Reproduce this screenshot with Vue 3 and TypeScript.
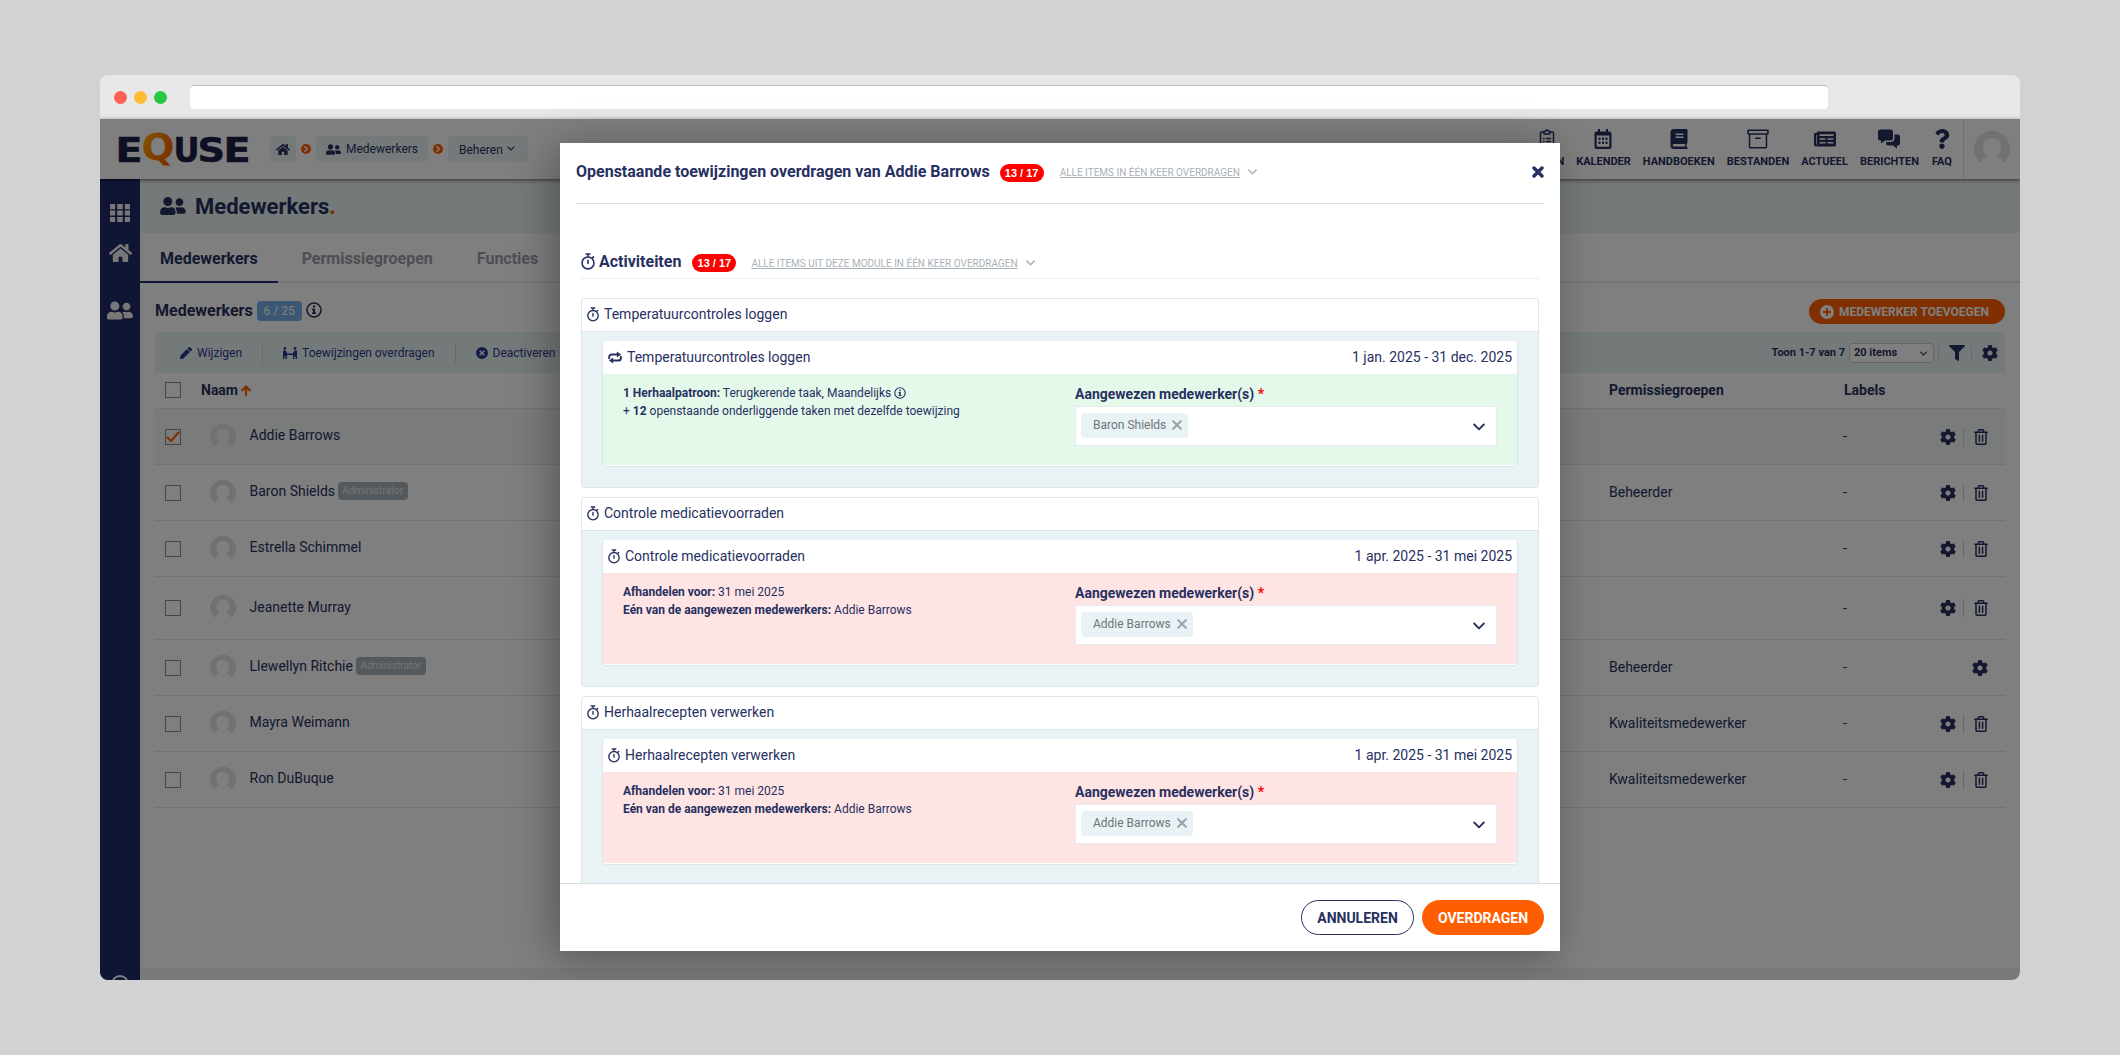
<template>
  <div class="stage">
    <div class="browser">
      <div class="browser-bar">
        <div class="dots">
          <span class="dot red"></span>
          <span class="dot yellow"></span>
          <span class="dot green"></span>
        </div>
        <div class="address"></div>
      </div>

      <div class="app">
        <header class="topbar">
          <svg class="logo" viewBox="-6 0 144 42">
            <defs>
              <linearGradient id="logo-q" x1="0" y1="0" x2="1" y2="0.6">
                <stop offset="0" stop-color="#ffb400" />
                <stop offset="1" stop-color="#ff5e00" />
              </linearGradient>
            </defs>
            <text
              v-for="letter in logo"
              :key="letter.x"
              :class="letter.char === 'Q' ? 'logo-q' : 'logo-text'"
              :x="letter.x"
              :y="letter.y"
              :textLength="letter.width"
              lengthAdjust="spacingAndGlyphs"
            >{{ letter.char }}</text>
          </svg>
          <nav class="crumbs">
            <span class="crumb home"><Icon name="home" /></span>
            <span class="crumb-sep"><Icon name="angle" /></span>
            <span class="crumb people"><Icon name="users" />Medewerkers</span>
            <span class="crumb-sep"><Icon name="angle" /></span>
            <span class="crumb manage">Beheren<Icon name="chevron" /></span>
          </nav>
          <nav class="modules">
            <div v-for="item in modules" :key="item.label" class="module">
              <Icon :name="item.icon" />
              <span>{{ item.label }}</span>
            </div>
          </nav>
          <div class="profile"><Icon name="avatar" /></div>
        </header>

        <div class="below">
          <aside class="sidebar">
            <Icon name="grid" class="side-grid" />
            <Icon name="home" class="side-home" />
            <span class="side-line"></span>
            <Icon name="users" class="side-users" />
            <span class="side-help"></span>
          </aside>

          <main class="main">
            <div class="page-title">
              <Icon name="users" />
              <h1>Medewerkers<b>.</b></h1>
            </div>

            <div class="tabs">
              <span v-for="(tab, i) in tabs" :key="tab" class="tab" :class="{ active: i === 0 }">{{ tab }}</span>
            </div>

            <div class="content">
              <div class="section-head">
                <h2>Medewerkers</h2>
                <span class="count">6 / 25</span>
                <Icon name="info" />
                <button class="add"><Icon name="plus" />MEDEWERKER TOEVOEGEN</button>
              </div>

              <div class="toolbar">
                <span class="tool"><Icon name="pencil" />Wijzigen</span>
                <span class="tool transfer"><Icon name="transfer" />Toewijzingen overdragen</span>
                <span class="tool"><Icon name="cancel" />Deactiveren</span>
                <span class="showing">Toon 1-7 van 7</span>
                <span class="page-size">20 items<Icon name="chevron" /></span>
                <span class="tool-icon"><Icon name="filter" /></span>
                <span class="tool-icon last"><Icon name="cog" /></span>
              </div>

              <div class="row head">
                <span class="check"></span>
                <span class="sort">Naam<Icon name="arrow" /></span>
                <span class="groups">Permissiegroepen</span>
                <span class="labels">Labels</span>
              </div>
              <div
                v-for="user in users"
                :key="user.name"
                class="row"
                :class="{ selected: user.selected, tall: user.tall }"
              >
                <span class="check"><Icon v-if="user.selected" name="tick" /></span>
                <Icon name="avatar" class="avatar" />
                <span class="name">{{ user.name }}<em v-if="user.admin">Administrator</em></span>
                <span class="groups">{{ user.group }}</span>
                <span class="labels">-</span>
                <span class="actions">
                  <Icon name="cog" />
                  <template v-if="!user.locked">
                    <i></i>
                    <Icon name="trash" class="trash" />
                  </template>
                </span>
              </div>
              <div class="page-foot"></div>
            </div>
          </main>
        </div>

        <div class="overlay">
          <section class="modal">
            <header class="modal-head">
              <h2>Openstaande toewijzingen overdragen van Addie Barrows</h2>
              <span class="pill">13 / 17</span>
              <a class="all">ALLE ITEMS IN ÉÉN KEER OVERDRAGEN</a>
              <Icon name="chevron" class="all-icon" />
              <Icon name="close" class="close" />
            </header>

            <div class="modal-body">
              <div class="module-head">
                <Icon name="timer" />
                <h2>Activiteiten</h2>
                <span class="pill">13 / 17</span>
                <a class="all">ALLE ITEMS UIT DEZE MODULE IN ÉÉN KEER OVERDRAGEN</a>
                <Icon name="chevron" class="all-icon" />
              </div>

              <article v-for="task in tasks" :key="task.title" class="card">
                <div class="card-head"><Icon name="timer" />{{ task.title }}</div>
                <div class="task">
                  <div class="card-head">
                    <Icon :name="task.recurring ? 'repeat' : 'timer'" :class="{ repeat: task.recurring }" />
                    {{ task.title }}
                    <span class="period">{{ task.period }}</span>
                  </div>
                  <div class="task-body" :class="task.recurring ? 'done' : 'open'">
                    <div v-if="task.recurring" class="details">
                      <p><b>1 Herhaalpatroon:</b> Terugkerende taak, Maandelijks <Icon name="info" /></p>
                      <p>+ <b>12</b> openstaande onderliggende taken met dezelfde toewijzing</p>
                    </div>
                    <div v-else class="details">
                      <p><b>Afhandelen voor:</b> 31 mei 2025</p>
                      <p><b>Eén van de aangewezen medewerkers:</b> Addie Barrows</p>
                    </div>
                    <div class="field">
                      <label>Aangewezen medewerker(s) <span>*</span></label>
                      <div class="select">
                        <span class="tag">{{ task.assignee }}<Icon name="cross" /></span>
                        <Icon name="chevron" class="open-icon" />
                      </div>
                    </div>
                  </div>
                </div>
              </article>
            </div>

            <footer class="modal-foot">
              <button class="btn">ANNULEREN</button>
              <button class="btn primary">OVERDRAGEN</button>
            </footer>
          </section>
        </div>
      </div>
    </div>
  </div>
</template>

<script setup lang="ts">
import { h } from 'vue'

interface Glyph {
  box: string
  body: string
}

interface User {
  name: string
  group?: string
  admin?: boolean
  selected?: boolean
  tall?: boolean
  locked?: boolean
}

interface Task {
  title: string
  period: string
  assignee: string
  recurring?: boolean
}

const line = (d: string, width: number) =>
  `<path d="${d}" fill="none" stroke="currentColor" stroke-width="${width}" stroke-linecap="round" stroke-linejoin="round"/>`
const solid = (d: string) => `<path d="${d}" fill="currentColor" fill-rule="evenodd"/>`

const glyphs: Record<string, Glyph> = {
  home: {
    box: '0 0 576 512',
    body: solid('M280.37 148.26L96 300.11V464a16 16 0 0 0 16 16l112.06-.29a16 16 0 0 0 15.92-16V368a16 16 0 0 1 16-16h64a16 16 0 0 1 16 16v95.64a16 16 0 0 0 16 16.05L464 480a16 16 0 0 0 16-16V300L295.67 148.26a12.19 12.19 0 0 0-15.3 0zM571.6 251.47L488 182.56V44.05a12 12 0 0 0-12-12h-56a12 12 0 0 0-12 12v72.61L318.47 43a48 48 0 0 0-61 0L4.34 251.47a12 12 0 0 0-1.6 16.9l25.5 31A12 12 0 0 0 45.15 301l235.22-193.74a12.19 12.19 0 0 1 15.3 0L530.9 301a12 12 0 0 0 16.9-1.6l25.5-31a12 12 0 0 0-1.7-16.93z'),
  },
  users: {
    box: '0 32 640 448',
    body: solid('M192 256c61.9 0 112-50.1 112-112S253.9 32 192 32 80 82.1 80 144s50.1 112 112 112zm76.8 32h-8.3c-20.8 10-43.9 16-68.5 16s-47.6-6-68.5-16h-8.3C51.6 288 0 339.6 0 403.2V432c0 26.5 21.5 48 48 48h288c26.5 0 48-21.5 48-48v-28.8c0-63.6-51.6-115.2-115.2-115.2zM480 256c53 0 96-43 96-96s-43-96-96-96-96 43-96 96 43 96 96 96zm48 32h-3.8c-13.9 4.8-28.6 8-44.2 8s-30.3-3.2-44.2-8H432c-20.4 0-39.2 5.9-55.7 15.4 24.4 26.3 39.7 61.2 39.7 99.8v38.4c0 2.2-.5 4.3-.6 6.4H592c26.5 0 48-21.5 48-48 0-61.9-50.1-112-112-112z'),
  },
  cog: {
    box: '8 8 496 496',
    body: solid('M487.4 315.7l-42.6-24.6c4.3-23.2 4.3-47 0-70.2l42.6-24.6c4.9-2.8 7.1-8.6 5.5-14-11.1-35.6-30-67.8-54.7-94.6-3.8-4.1-10-5.1-14.8-2.3L380.8 110c-17.9-15.4-38.5-27.3-60.8-35.1V25.8c0-5.6-3.9-10.5-9.4-11.7-36.7-8.2-74.3-7.8-109.2 0-5.5 1.2-9.4 6.1-9.4 11.7V75c-22.2 7.9-42.8 19.8-60.8 35.1L88.7 85.5c-4.9-2.8-11-1.9-14.8 2.3-24.7 26.7-43.6 58.9-54.7 94.6-1.7 5.4.6 11.2 5.5 14L67.3 221c-4.3 23.2-4.3 47 0 70.2l-42.6 24.6c-4.9 2.8-7.1 8.6-5.5 14 11.1 35.6 30 67.8 54.7 94.6 3.8 4.1 10 5.1 14.8 2.3l42.6-24.6c17.9 15.4 38.5 27.3 60.8 35.1v49.2c0 5.6 3.9 10.5 9.4 11.7 36.7 8.2 74.3 7.8 109.2 0 5.5-1.2 9.4-6.1 9.4-11.7v-49.2c22.2-7.9 42.8-19.8 60.8-35.1l42.6 24.6c4.9 2.8 11 1.9 14.8-2.3 24.7-26.7 43.6-58.9 54.7-94.6 1.5-5.5-.7-11.3-5.6-14.1zM256 336c-44.1 0-80-35.9-80-80s35.9-80 80-80 80 35.9 80 80-35.9 80-80 80z'),
  },
  filter: {
    box: '0 0 512 512',
    body: solid('M487.976 0H24.028C2.71 0-8.047 25.866 7.058 40.971L192 225.941V432c0 7.831 3.821 15.17 10.237 19.662l80 55.98C298.02 518.69 320 507.493 320 487.98V225.941l184.947-184.97C520.021 25.896 509.338 0 487.976 0z'),
  },
  pencil: {
    box: '0 0 512 512',
    body: solid('M497.9 142.1l-46.1 46.1c-4.7 4.7-12.3 4.7-17 0l-111-111c-4.7-4.7-4.7-12.3 0-17l46.1-46.1c18.7-18.7 49.1-18.7 67.9 0l60.1 60.1c18.8 18.7 18.8 49.1 0 67.9zM284.2 99.8L21.6 362.4.4 483.9c-2.9 16.4 11.4 30.6 27.8 27.8l121.5-21.3 262.6-262.6c4.7-4.7 4.7-12.3 0-17l-111-111c-4.8-4.7-12.4-4.7-17.1 0z'),
  },
  question: {
    box: '0 0 384 512',
    body: solid('M202.021 0C122.202 0 70.503 32.703 29.914 91.026c-7.363 10.58-5.093 25.086 5.178 32.874l43.138 32.709c10.373 7.865 25.132 6.026 33.253-4.148 25.049-31.381 43.63-49.449 82.757-49.449 30.764 0 68.816 19.799 68.816 49.631 0 22.552-18.617 34.134-48.993 51.164-35.423 19.86-82.299 44.576-82.299 106.405V320c0 13.255 10.745 24 24 24h72.471c13.255 0 24-10.745 24-24v-5.773c0-42.86 125.268-44.645 125.268-160.627C377.504 66.256 286.902 0 202.021 0zM192 373.459c-38.196 0-69.271 31.075-69.271 69.271 0 38.195 31.075 69.27 69.271 69.27s69.271-31.075 69.271-69.271-31.075-69.27-69.271-69.27z'),
  },
  angle: { box: '0 0 10 10', body: line('M4 2.700L6.300 5L4 7.300', 1.6) },
  chevron: { box: '0 0 12 8', body: line('M1.200 1.500L6 6.300L10.800 1.500', 1.9) },
  close: { box: '0 0 12 12', body: line('M2 2L10 10M10 2L2 10', 3.4) },
  cross: { box: '0 0 10 10', body: line('M1.200 1.200L8.800 8.800M8.800 1.200L1.200 8.800', 2.1) },
  tick: { box: '0 0 14 12', body: line('M1.500 6.500L5 10L12.500 1.500', 2.2) },
  arrow: { box: '0 0 10 11', body: line('M5 10V1.800M1.300 5.300L5 1.500L8.700 5.300', 2.3) },
  info: {
    box: '0 0 16 16',
    body: line('M8 1A7 7 0 1 1 8 15A7 7 0 1 1 8 1', 1.5) + solid('M7 3.600h2v2H7zM6 6.800h3v3.700h1V12H6v-1.500h1V8.200H6z'),
  },
  plus: {
    box: '0 0 14 14',
    body: solid('M7 0a7 7 0 1 1 0 14A7 7 0 1 1 7 0zM6 3v3H3v2h3v3h2V8h3V6H8V3z'),
  },
  cancel: {
    box: '0 0 12 12',
    body: solid('M6 0a6 6 0 1 1 0 12A6 6 0 1 1 6 0zM4.300 3.200L3.200 4.300 4.900 6 3.200 7.700l1.100 1.100L6 7.100l1.700 1.700 1.100-1.100L7.100 6l1.700-1.700-1.100-1.100L6 4.900z'),
  },
  transfer: {
    box: '0 0 14 12',
    body:
      solid('M2 0a1.400 1.400 0 1 1 0 2.800A1.400 1.400 0 1 1 2 0zM12 0a1.400 1.400 0 1 1 0 2.800A1.400 1.400 0 1 1 12 0zM0 3.500h2.800l1.500 2.900h5.400l1.500-2.900H14V12h-1.400V9.500h-1.200V12h-1.400V8H4v4H2.600V9.500H1.400V12H0z'),
  },
  grid: {
    box: '0 0 20 18',
    body: solid('M1 0h4.200v5.200H0V1a1 1 0 0 1 1-1zM7.200 0h5.600v5.200H7.200zM14.800 0H19a1 1 0 0 1 1 1v4.200h-5.200zM0 6.600h5.200v4.900H0zM7.200 6.600h5.600v4.900H7.200zM14.800 6.600H20v4.900h-5.200zM0 12.900h5.200V18H1a1 1 0 0 1-1-1zM7.200 12.900h5.600V18H7.200zM14.800 12.900H20V17a1 1 0 0 1-1 1h-4.200z'),
  },
  clipboard: {
    box: '0 0 16 20',
    body:
      line('M5 3H2.500A1 1 0 0 0 1.500 4V18A1 1 0 0 0 2.500 19H13.500A1 1 0 0 0 14.500 18V4A1 1 0 0 0 13.500 3H11M5 2.500H6.500A1.500 1.500 0 0 1 9.500 2.500H11V5H5Z', 1.5) +
      line('M4.500 9.500H5M7.500 9.500H11.500M4.500 12.500H5M7.500 12.500H11.500M4.500 15.500H5M7.500 15.500H11.500', 1.5),
  },
  calendar: {
    box: '0 0 17 20',
    body: solid('M3.500 0h2v2.500h6V0h2v2.500H15a2 2 0 0 1 2 2V18a2 2 0 0 1-2 2H2a2 2 0 0 1-2-2V4.500a2 2 0 0 1 2-2h1.500zM2.200 6.500V17.800h12.600V6.500zM4 8.500h2v2.500H4zM7.500 8.500h2v2.500h-2zM11 8.500h2v2.500h-2zM4 12.500h2V15H4zM7.500 12.500h2V15h-2zM11 12.500h2V15h-2z'),
  },
  book: {
    box: '0 0 17 20',
    body: solid('M3.500 0H16a1 1 0 0 1 1 1v13l-1 1v2.500l1 1V20H3.500A3.500 3.500 0 0 1 0 16.500v-13A3.500 3.500 0 0 1 3.500 0zM5 4.500V6h8V4.500zM5 7.500V9h8V7.500zM3.500 15a1.250 1.250 0 0 0 0 2.500H14.500V15z'),
  },
  archive: {
    box: '0 0 20 18',
    body: line('M1 1H19V4.500H1ZM2.300 4.500V16A1 1 0 0 0 3.300 17H16.700A1 1 0 0 0 17.700 16V4.500M8 8.300H12', 1.4),
  },
  news: {
    box: '0 0 22 16',
    body: solid('M4 .500h16.500A1.500 1.500 0 0 1 22 2v12a1.500 1.500 0 0 1-1.500 1.500H2A2 2 0 0 1 0 13.500V3a1 1 0 0 1 1-1h1.500a1.500 1.500 0 0 1 1.500-1.500zM5.500 3.300v1.700h14V3.300zM5.500 7.200v1.600h6V7.200zM13.500 7.200v1.600h6V7.200zM5.500 11v1.600h6V11zM13.500 11v1.600h6V11zM2 4v9.500h.700V4z'),
  },
  chat: {
    box: '0 0 22 19',
    body: solid('M2.500 0h10A2.500 2.500 0 0 1 15 2.500v6a2.500 2.500 0 0 1-2.500 2.500H7l-4 3v-3h-.500A2.500 2.500 0 0 1 0 8.500v-6A2.500 2.500 0 0 1 2.500 0zM16.500 5H19.500A2.500 2.500 0 0 1 22 7.500v6a2.500 2.500 0 0 1-2.500 2.500H19v3l-4-3H10.500A2.500 2.500 0 0 1 8 13.500V12.500h4.500A4 4 0 0 0 16.500 8.500z'),
  },
  trash: {
    box: '0 0 14 16',
    body: line('M.800 3.200H13.200M4.300 3V1.600A.800 .800 0 0 1 5.100 .800H8.900A.800 .800 0 0 1 9.700 1.600V3M2 3.500V14.200A1 1 0 0 0 3 15.200H11A1 1 0 0 0 12 14.200V3.500M5.400 6.300V12.300M8.600 6.300V12.300', 1.5),
  },
  timer: {
    box: '0 0 13 16',
    body: line('M6.500 3.700A5.600 5.600 0 1 1 6.500 14.900A5.600 5.600 0 1 1 6.500 3.700M4.600 .900H8.400M6.500 1V3.500M10.700 4.600L11.600 3.700M6.500 6.800V9.800', 1.5),
  },
  repeat: {
    box: '0 0 15 13',
    body:
      line('M1.300 7.300V5.800A2.600 2.600 0 0 1 3.900 3.200H10.500M13.700 5.700V7.200A2.600 2.600 0 0 1 11.100 9.800H4.500', 2.1) +
      solid('M9.500 0L14 3.200L9.500 6.400zM5.500 6.600L1 9.800L5.500 13z'),
  },
  avatar: {
    box: '0 0 36 36',
    body: '<path d="M7 32A18 18 0 1 1 29 32C28 28 26 26.500 22.500 25.500C25.500 23 27 20 27 16C27 10 23.500 7 18 7S9 10 9 16C9 20 10.500 23 13.500 25.500C10 26.500 8 28 7 32Z" fill="currentColor"/>',
  },
}

const Icon = (props: { name: string }) =>
  h('svg', { class: 'icon', viewBox: glyphs[props.name].box, innerHTML: glyphs[props.name].body })
Icon.props = ['name']

const logo = [
  { char: 'E', x: -3.5, y: 34, width: 27 },
  { char: 'Q', x: 22.5, y: 32, width: 33 },
  { char: 'U', x: 54.5, y: 34, width: 26 },
  { char: 'S', x: 78.5, y: 34, width: 27.5 },
  { char: 'E', x: 104.5, y: 34, width: 27 },
]

const modules = [
  { label: 'TAKEN', icon: 'clipboard' },
  { label: 'KALENDER', icon: 'calendar' },
  { label: 'HANDBOEKEN', icon: 'book' },
  { label: 'BESTANDEN', icon: 'archive' },
  { label: 'ACTUEEL', icon: 'news' },
  { label: 'BERICHTEN', icon: 'chat' },
  { label: 'FAQ', icon: 'question' },
]

const tabs = ['Medewerkers', 'Permissiegroepen', 'Functies']

const users: User[] = [
  { name: 'Addie Barrows', selected: true },
  { name: 'Baron Shields', group: 'Beheerder', admin: true },
  { name: 'Estrella Schimmel' },
  { name: 'Jeanette Murray', tall: true },
  { name: 'Llewellyn Ritchie', group: 'Beheerder', admin: true, locked: true },
  { name: 'Mayra Weimann', group: 'Kwaliteitsmedewerker' },
  { name: 'Ron DuBuque', group: 'Kwaliteitsmedewerker' },
]

const tasks: Task[] = [
  { title: 'Temperatuurcontroles loggen', period: '1 jan. 2025 - 31 dec. 2025', assignee: 'Baron Shields', recurring: true },
  { title: 'Controle medicatievoorraden', period: '1 apr. 2025 - 31 mei 2025', assignee: 'Addie Barrows' },
  { title: 'Herhaalrecepten verwerken', period: '1 apr. 2025 - 31 mei 2025', assignee: 'Addie Barrows' },
]
</script>

<style>
body {
  margin: 0;
  background: #d2d2d2;
}
</style>

<style scoped>
* {
  box-sizing: border-box;
}

.stage {
  --navy: #27305f;
  --orange: #ff5e00;
  --mist: #e9f2f5;
  width: 2120px;
  height: 1055px;
  padding: 75px 100px;
  background: #d2d2d2;
  color: var(--navy);
  font: 14px/18px Roboto, sans-serif;
}

h1,
h2,
p {
  margin: 0;
}

button {
  font-family: inherit;
  border: 0;
}

.icon {
  display: block;
  flex: none;
}

.browser {
  width: 1920px;
  height: 905px;
  border-radius: 8px;
  overflow: hidden;
}

.browser-bar {
  display: flex;
  align-items: center;
  height: 44px;
  padding-left: 13.5px;
  background: #e8e8e8;
}

.dots {
  display: flex;
  gap: 7px;
  width: 76.5px;
}

.dot {
  width: 13px;
  height: 13px;
  border-radius: 50%;
}

.red { background: #ff5f57; }
.yellow { background: #febc2e; }
.green { background: #28c840; }

.address {
  width: 1638px;
  height: 24px;
  border-top: 1px solid #bcbcbc;
  border-radius: 4px;
  background: #fff;
}

.app {
  position: relative;
  height: 861px;
  background: #fff;
}

/* top bar */
.topbar {
  position: relative;
  display: flex;
  align-items: center;
  height: 60px;
  padding-left: 13px;
  background: #fff;
  box-shadow: 0 1px 4px rgba(0, 0, 0, 0.6);
}

.logo {
  width: 144px;
  height: 42px;
  margin-right: 13px;
}

.logo-text,
.logo-q {
  font-family: 'DejaVu Sans', sans-serif;
  font-weight: bold;
}

.logo-text {
  font-size: 33px;
  fill: #1b2145;
  stroke: #1b2145;
  stroke-width: 0.6px;
}

.logo-q {
  font-size: 38px;
  fill: url(#logo-q);
}

.crumbs {
  display: flex;
  align-items: center;
  gap: 5px;
}

.crumb {
  display: flex;
  align-items: center;
  height: 26px;
  border-radius: 4px;
  background: var(--mist);
  font-size: 12px;
}

.crumb.home {
  width: 26px;
  justify-content: center;
}

.crumb.home .icon { width: 14px; height: 13px; }

.crumb-sep {
  width: 10px;
  height: 10px;
  border-radius: 50%;
  background: var(--orange);
  color: #fff;
}

.crumb.people {
  width: 112px;
  padding-left: 10px;
  gap: 5px;
}

.crumb.people .icon { width: 15px; height: 11px; }

.crumb.manage {
  width: 80px;
  padding: 2px 0 0 11px;
  gap: 4px;
}

.crumb.manage .icon { width: 8px; height: 5px; margin-top: -3px; }

.modules {
  display: flex;
  gap: 12px;
  margin-left: auto;
}

.module {
  display: flex;
  flex-direction: column;
  align-items: center;
  font-size: 11px;
  font-weight: bold;
  line-height: 14px;
  gap: 6px;
}

.module .icon { width: 22px; height: 20px; }

.profile {
  display: flex;
  align-items: center;
  width: 57px;
  height: 58px;
  margin-left: 10px;
  padding-left: 10px;
  border-left: 1px solid #dcdcdc;
  color: #e2e2e2;
}

.profile .icon { width: 36px; height: 36px; }

.below {
  display: flex;
  height: 801px;
}

.sidebar {
  display: flex;
  flex-direction: column;
  align-items: center;
  width: 40px;
  height: 801px;
  padding-top: 25px;
  background: #1e2b66;
  color: #f0f0f0;
  overflow: hidden;
}

.side-grid { width: 20px; height: 18px; }
.side-home { width: 23px; height: 22px; margin-top: 20px; }
.side-line { width: 28px; height: 2px; margin-top: 16px; background: #fff; }
.side-users { width: 26px; height: 19px; margin-top: 21px; }

.side-help {
  flex: none;
  width: 18px;
  height: 18px;
  margin-top: 655px;
  border: 2px solid #fff;
  border-radius: 50%;
}

.main {
  flex: 1;
}

.page-title {
  display: flex;
  align-items: center;
  height: 54px;
  padding-left: 20px;
  gap: 9px;
  background: var(--mist);
}

.page-title .icon { width: 26px; height: 18px; }

.page-title h1 {
  padding-top: 2px;
  font-size: 22px;
  line-height: 26px;
}

.page-title b { color: var(--orange); }

.tabs {
  display: flex;
  gap: 4px;
  height: 50px;
  border-bottom: 2px solid #e6ebee;
}

.tab {
  height: 50px;
  padding: 17px 20px 0;
  color: #9a9da8;
  font-size: 16px;
  font-weight: bold;
}

.tab.active {
  color: var(--navy);
  border-bottom: 2px solid #1e2b66;
}

.content {
  display: flex;
  flex-direction: column;
  height: 697px;
  padding: 15px 15px 0;
}

.section-head {
  display: flex;
  align-items: center;
  height: 34px;
  padding-bottom: 8px;
}

.section-head h2 {
  font-size: 16px;
}

.section-head > .icon { width: 16px; height: 16px; margin: -2px 0 0 4px; }

.count {
  width: 45px;
  height: 20px;
  margin-left: 4px;
  border-radius: 4px;
  background: #78afe6;
  color: #fff;
  font-size: 12px;
  line-height: 20px;
  text-align: center;
}

.add {
  display: flex;
  align-items: center;
  width: 196px;
  height: 25px;
  margin-left: auto;
  padding: 1px 0 0 11px;
  gap: 5px;
  border-radius: 13px;
  background: var(--orange);
  color: #fff;
  font-size: 12px;
  font-weight: bold;
}

.add .icon { width: 14px; height: 14px; }

.toolbar {
  display: flex;
  align-items: center;
  height: 41px;
  padding: 1px 7px 0 25px;
  background: var(--mist);
  color: #2b3a8c;
  font-size: 12px;
}

.tool {
  display: flex;
  align-items: center;
  height: 20px;
  padding-right: 20px;
  margin-right: 20px;
  gap: 5px;
  border-right: 1px solid #ccd6da;
}

.tool .icon { width: 12px; height: 12px; }
.tool.transfer .icon { width: 14px; height: 12px; }

.showing {
  margin-left: auto;
  color: var(--navy);
  font-size: 11px;
  font-weight: bold;
}

.page-size {
  display: flex;
  align-items: center;
  justify-content: space-between;
  width: 85px;
  height: 20px;
  margin: 0 4px 0 4px;
  padding: 0 6px 0 4px;
  border: 1px solid #ccc;
  border-radius: 4px;
  background: #fff;
  color: var(--navy);
  font-size: 11px;
  font-weight: bold;
}

.page-size .icon { width: 7px; height: 5px; }

.tool-icon {
  display: flex;
  align-items: center;
  width: 33px;
  height: 16px;
  padding-left: 10px;
  border-left: 1px solid #ccd6da;
  color: var(--navy);
}

.tool-icon.last { width: 27px; }
.tool-icon .icon { width: 16px; height: 16px; }

/* table */
.row {
  display: flex;
  align-items: center;
  height: 56px;
  flex: none;
  padding-left: 10px;
  border-bottom: 1px solid #e2e8ea;
}

.row.head {
  height: 36px;
  padding-bottom: 1px;
  font-weight: bold;
}

.row.selected { background: #f4f9f9; }
.row.tall { height: 63px; }

.check {
  display: flex;
  align-items: center;
  justify-content: center;
  width: 16px;
  height: 16px;
  border: 1px solid #8c8c8c;
  color: var(--orange);
}

.check .icon { width: 14px; height: 12px; }

.sort {
  display: flex;
  align-items: center;
  width: 1408px;
  padding-left: 20px;
  gap: 3px;
}

.head .groups { padding-left: 20px; width: 255px; }
.sort .icon { width: 10px; height: 11px; color: var(--orange); }

.avatar {
  width: 26px;
  height: 26px;
  margin: 0 13.5px 0 29px;
  color: #e2e2e2;
}

.name {
  display: flex;
  align-items: center;
  width: 1359.5px;
  padding-bottom: 3px;
}

.name em {
  height: 18px;
  margin-left: 3px;
  padding: 0 4.5px;
  border-radius: 4px;
  background: #a9b3ba;
  color: #e8e8e8;
  font-style: normal;
  font-size: 10px;
  line-height: 17px;
}

.groups { width: 234px; }
.row:not(.head) .groups,
.row:not(.head) .labels { padding-bottom: 1px; }

.actions {
  display: flex;
  align-items: center;
  margin-left: auto;
  padding-right: 17px;
}

.actions .icon { width: 16px; height: 16px; }
.actions .trash { width: 14px; }

.actions i {
  width: 1px;
  height: 18px;
  margin: 0 10px 0 7px;
  background: #ccd2d4;
}

.page-foot {
  height: 12px;
  margin: auto -15px 0;
  background: #f2f2f2;
}

/* modal */
.overlay {
  position: absolute;
  inset: 0;
  display: flex;
  justify-content: center;
  align-items: flex-start;
  padding-top: 24px;
  background: rgba(0, 0, 0, 0.5);
}

.modal {
  display: flex;
  flex-direction: column;
  width: 1000px;
  height: 808px;
  background: #fff;
  box-shadow: -6px 5px 40px rgba(0, 0, 0, 0.33);
}

.modal-head {
  display: flex;
  align-items: center;
  flex: none;
  height: 61px;
  margin: 0 16px;
  padding-bottom: 3px;
  border-bottom: 1px solid #dcdee2;
}

.modal h2 {
  font-size: 16px;
}

.pill {
  width: 44px;
  height: 18px;
  margin: 2px 16px 0 10px;
  border-radius: 9px;
  background: #f00;
  color: #fff;
  font: bold 11px/18px 'Liberation Sans', sans-serif;
  text-align: center;
}

.all {
  color: #a9b1b8;
  font-size: 10px;
  text-decoration: underline;
  margin-top: 2px;
}

.all-icon { width: 9px; height: 6px; margin: 1px 0 0 8px; color: #a9b1b8; }
.close { width: 12px; height: 12px; margin-left: auto; }

.modal-body {
  flex: 1;
  padding: 41px 21px 0;
  overflow: hidden;
}

.module-head {
  display: flex;
  align-items: center;
  height: 34px;
  margin-bottom: 19px;
  padding-top: 1px;
  border-bottom: 1px solid #eceef0;
}

.module-head > .icon:first-child { width: 14px; height: 17px; margin: -2px 4px 0 0; }
.module-head .pill { margin-left: 11px; margin-right: 15px; }
.module-head .all { margin-top: 3px; }

.card {
  height: 190px;
  margin-bottom: 9px;
  border: 1px solid #dbe6ea;
  border-radius: 4px;
  background: var(--mist);
  overflow: hidden;
}

.card-head {
  display: flex;
  align-items: center;
  height: 33px;
  padding: 0 5px 2.5px;
  gap: 5px;
  background: #fff;
}

.card > .card-head { border-bottom: 1px solid #dbe6ea; }
.card-head .icon { width: 12px; height: 15px; margin-top: 2px; }
.card-head .icon.repeat { width: 14px; height: 13px; }
.period { margin-left: auto; }

.task {
  width: 916px;
  height: 126px;
  margin: 9px 0 0 20px;
  border: 1px solid #dbe6ea;
  border-top-color: #fff;
  border-radius: 4px;
  background: #fff;
  overflow: hidden;
}

.task > .card-head { height: 32px; }

.task-body {
  display: flex;
  height: 91px;
  padding-left: 20px;
}

.task-body.done { background: #e5f9eb; }
.task-body.open { background: #ffe4e4; }

.details {
  width: 452px;
  padding-top: 10px;
  font-size: 12px;
}

.details .icon {
  display: inline-block;
  width: 12px;
  height: 12px;
  vertical-align: -2px;
}

.field {
  width: 422px;
  padding-top: 11px;
}

.field label {
  display: block;
  font-weight: bold;
}

.field label span { color: #f00; }

.select {
  display: flex;
  align-items: center;
  height: 40px;
  margin-top: 3px;
  padding: 0 11px 1px 5px;
  border: 1px solid #e6ecf0;
  background: #fff;
}

.tag {
  display: flex;
  align-items: center;
  height: 25px;
  padding: 0 6px 1px 12px;
  gap: 6px;
  border-radius: 4px;
  background: var(--mist);
  color: #6f757c;
  font-size: 12px;
}

.tag .icon { width: 10px; height: 10px; color: #9aa4ab; }
.open-icon { width: 12px; height: 8px; margin: 2px 0 0 auto; }

.modal-foot {
  display: flex;
  justify-content: flex-end;
  align-items: center;
  flex: none;
  height: 68px;
  padding: 0 16px;
  gap: 8px;
  border-top: 1px solid #d9dde1;
}

.btn {
  width: 113px;
  height: 35px;
  padding-top: 2px;
  border: 1px solid var(--navy);
  border-radius: 18px;
  background: #fff;
  color: var(--navy);
  font-size: 14px;
  font-weight: bold;
}

.btn.primary {
  width: 122px;
  border-color: var(--orange);
  background: var(--orange);
  color: #fff;
}
</style>
